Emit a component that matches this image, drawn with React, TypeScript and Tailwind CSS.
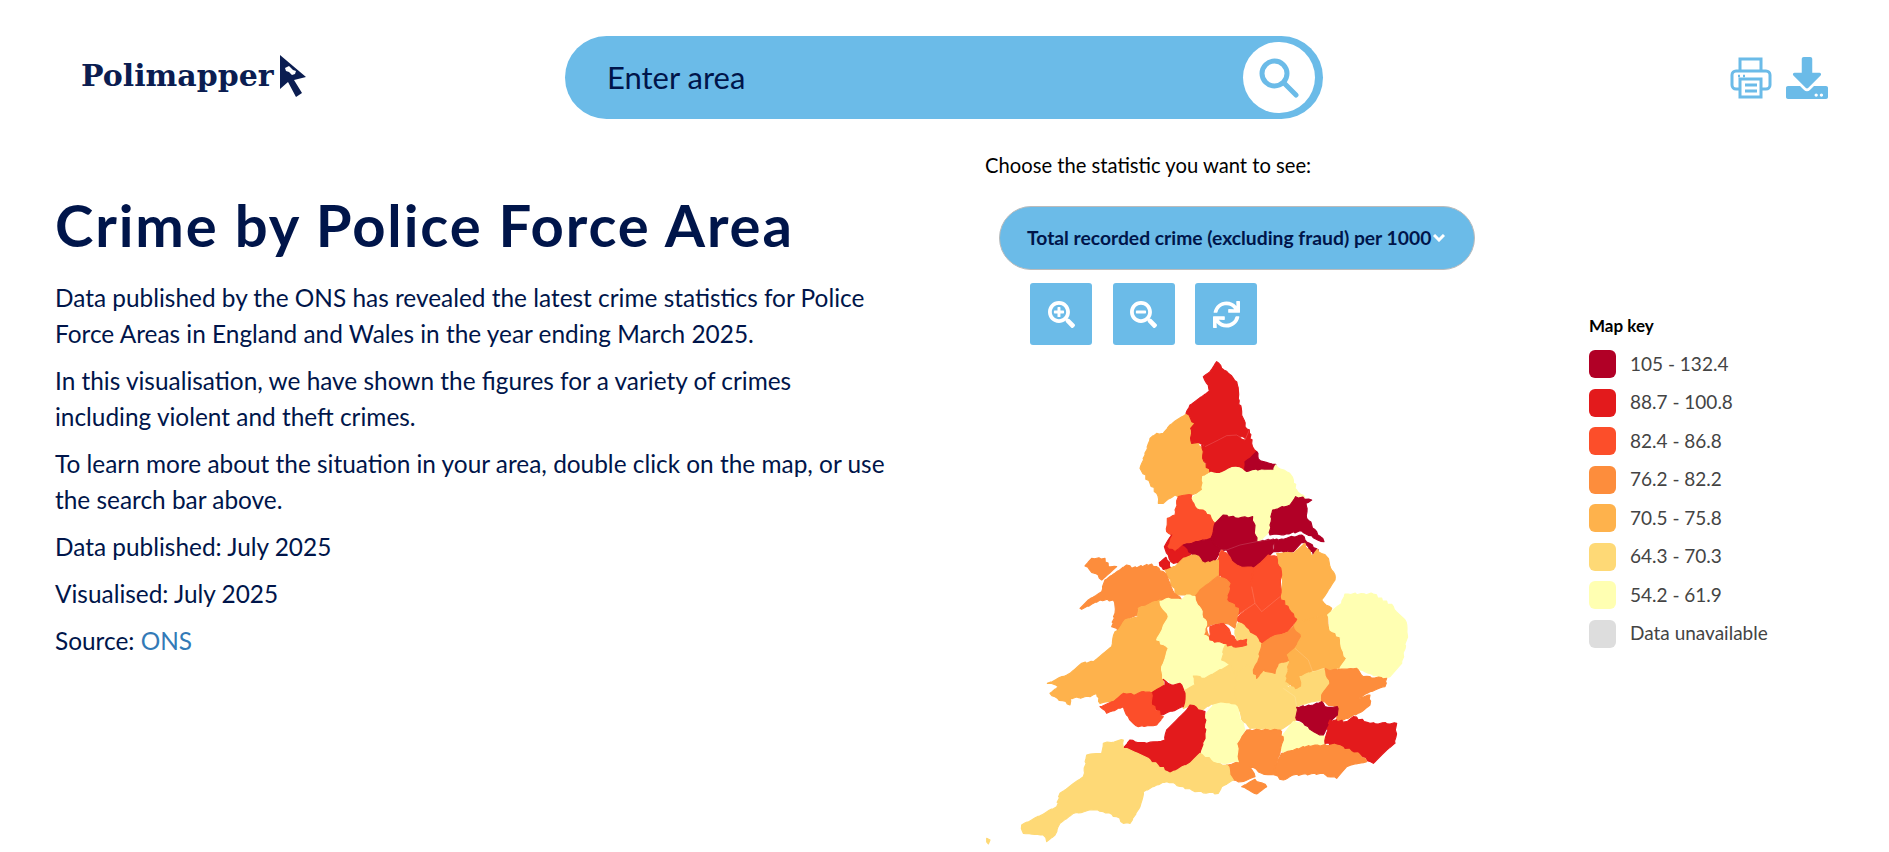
import { FaDownload, FaSearchMinus, FaSearchPlus, FaSync } from "react-icons/fa";

const colors = {
  a: "#b10026",
  b: "#e31a1c",
  c: "#fc4e2a",
  d: "#fd8d3c",
  e: "#feb24c",
  f: "#fed976",
  g: "#ffffb2",
};

type Region = { fill: string; points: string };

// the outlines were read off crops of different areas, so each set has its own offset
const at = (dx: number, dy: number, raw: string) =>
  raw
    .trim()
    .split(/\s+/)
    .map((p) => {
      const [x, y] = p.split(",").map(Number);
      return `${x + dx},${y + dy}`;
    })
    .join(" ");

const north = (raw: string) => at(510, 45, raw);
const south = (raw: string) => at(0, 750, raw);

// breaks long straight edges into short uneven steps, like the real boundaries
const rough = (raw: string) => {
  const pts = raw.split(" ").map((p) => p.split(",").map(Number));
  const out: string[] = [];
  pts.forEach(([x1, y1], i) => {
    const [x2, y2] = pts[(i + 1) % pts.length];
    const steps = Math.max(1, Math.round(Math.hypot(x2 - x1, y2 - y1) / 9));
    for (let s = 0; s < steps; s++) {
      const x = x1 + ((x2 - x1) * s) / steps;
      const y = y1 + ((y2 - y1) * s) / steps;
      const n = s === 0 ? 0 : Math.sin(x * 12.9 + y * 78.2) * 2.6;
      out.push(`${(x + n).toFixed(1)},${(y - n).toFixed(1)}`);
    }
  });
  return out.join(" ");
};

const regions: Region[] = [
  { fill: colors.e, points: north("168,178 195,205 182,225 185,265 205,262 220,290 218,310 243,350 218,365 218,405 185,420 145,425 135,420 115,432 100,445 85,445 80,415 60,385 30,340 45,300 60,250 80,235 100,235 120,210 140,195") },
  { fill: colors.b, points: north("260,20 275,40 295,55 310,70 322,90 325,130 335,170 345,215 358,225 345,250 320,240 290,242 265,255 225,275 205,262 185,265 182,220 195,205 168,175 180,150 215,125 238,108 230,85 220,65 240,50") },
  { fill: colors.b, points: north("225,275 265,255 290,242 320,240 345,255 358,225 365,265 380,290 360,310 347,350 335,342 305,338 270,355 240,352 218,310 220,290 215,270") },
  { fill: colors.a, points: north("380,290 385,312 437,328 432,345 395,345 347,350 345,320 360,310") },
  { fill: colors.g, points: north("437,330 470,350 490,375 500,405 525,430 495,425 480,450 428,465 420,510 418,530 400,548 380,560 365,500 368,485 325,490 280,480 255,505 240,480 195,455 183,430 218,405 218,365 243,352 270,355 305,338 335,342 347,352 395,345 432,345") },
  { fill: colors.a, points: north("497,425 545,435 528,445 530,490 560,530 582,560 545,542 515,528 470,536 455,540 420,540 420,510 428,465 480,450") },
  { fill: colors.a, points: north("455,552 515,540 550,578 565,585 550,600 530,570 515,562 490,590 445,590 430,590 430,555") },
  { fill: colors.c, points: north("145,425 185,420 183,430 195,455 240,480 255,505 243,550 205,560 160,570 135,590 110,575 125,540 110,530 112,490 135,480 140,445") },
  { fill: colors.b, points: north("125,540 103,575 115,600 130,625 160,625 185,595 160,570 135,590 110,575") },
  { fill: colors.b, points: "598,668 618,652 635,685 610,688" },
  { fill: colors.a, points: north("160,570 205,560 243,550 270,585 265,600 240,640 205,630 185,595") },
  { fill: colors.a, points: north("255,505 280,480 325,490 368,485 380,560 370,565 330,570 290,585 270,585 243,550") },
  { fill: colors.a, points: north("290,585 330,570 380,560 430,552 430,590 395,625 345,650 310,630 295,595") },
  { fill: colors.e, points: "950,640 1000,640 1035,610 1055,650 1072,628 1100,650 1125,705 1125,720 1105,750 1085,780 1115,805 1105,825 1020,845 1003,855 1010,838 960,770 968,720 950,680" },
  { fill: colors.c, points: "785,630 805,645 830,675 880,685 875,740 885,790 840,820 825,830 835,805 800,780 810,730 775,705 773,660" },
  { fill: colors.c, points: "880,685 900,670 925,645 950,650 965,705 960,770 905,815 885,790 875,740" },
  { fill: colors.c, points: "840,825 885,790 905,815 960,770 1010,838 985,875 935,892 905,912 865,870 835,845 830,835" },
  { fill: colors.e, points: "615,690 645,680 670,655 705,645 735,670 775,660 775,705 720,750 710,770 665,765 650,765" },
  { fill: colors.d, points: "720,750 775,708 810,730 800,780 835,805 830,835 825,865 795,850 750,855 735,865 730,885 745,900 750,900 740,855 718,800 705,770" },
  { fill: colors.d, points: "375,678 395,655 435,655 445,680 470,680 425,720 405,700" },
  { fill: colors.d, points: "360,805 385,780 425,755 435,720 500,675 515,685 575,672 610,695 650,765 665,780 600,780 535,805 535,825 495,840 475,870 455,860 465,820 460,780 420,780 365,808" },
  { fill: colors.e, points: "535,805 600,780 625,830 590,900 625,925 605,980 610,1015 615,1045 575,1060 550,1055 520,1065 490,1060 460,1085 420,1090 410,1060 390,1070 330,1075 330,1095 285,1070 270,1060 295,1040 262,1030 330,1000 365,970 400,965 455,920 465,875 475,870 495,840 535,830" },
  { fill: colors.g, points: "600,785 625,775 665,780 680,765 705,770 718,800 740,855 730,885 750,900 790,910 795,915 785,960 810,975 770,995 735,1015 700,1008 705,1035 675,1050 608,1015 605,980 625,925 590,900 625,830" },
  { fill: colors.f, points: "825,1000 860,975 880,985 890,1015 910,990 945,1000 955,970 988,960 978,1030 1000,1060 1010,1100 1010,1140 960,1170 870,1165 850,1145 825,1090" },
  { fill: colors.f, points: "825,870 835,848 865,870 905,912 895,960 880,985 860,975 825,1000 800,985 810,975 785,960 795,910 820,920 860,915 860,898 830,900" },
  { fill: colors.c, points: "750,858 790,850 810,875 830,905 860,898 860,915 820,920 790,910 750,900" },
  { fill: colors.d, points: "905,912 935,892 985,875 1003,855 1025,890 1005,925 982,945 988,960 955,970 945,1000 910,990 890,1015 880,990 895,960" },
  { fill: colors.e, points: "1003,855 1020,845 1100,825 1110,870 1140,890 1150,935 1160,955 1140,985 1105,990 1095,985 1058,995 1045,960 1005,925 1025,890" },
  { fill: colors.e, points: "982,945 1005,925 1045,960 1058,995 1020,1010 1025,1040 1005,1050 978,1025 988,960" },
  { fill: colors.g, points: "1103,825 1125,805 1145,790 1155,762 1240,762 1300,800 1335,840 1342,885 1325,970 1290,1010 1260,1013 1190,985 1140,985 1160,955 1150,935 1140,890 1110,870" },
  { fill: colors.f, points: "1020,1010 1058,995 1095,985 1110,1030 1085,1065 1085,1085 1060,1085 1010,1100 1000,1060 978,1028 1005,1050 1025,1040" },
  { fill: colors.d, points: "1095,985 1105,990 1190,985 1210,1010 1280,1015 1275,1040 1230,1055 1195,1075 1230,1065 1230,1095 1205,1115 1150,1140 1130,1140 1125,1100 1085,1085 1085,1065 1110,1030" },
  { fill: colors.g, points: "955,1202 1000,1145 1045,1160 1070,1180 1090,1185 1095,1215 1060,1220 985,1235 970,1238" },
  { fill: colors.a, points: "1010,1102 1060,1095 1085,1085 1095,1100 1132,1100 1132,1125 1115,1140 1090,1185 1070,1180 1045,1160 1010,1140" },
  { fill: colors.b, points: "1110,1140 1160,1145 1180,1130 1230,1150 1310,1150 1305,1210 1280,1230 1240,1270 1200,1245 1130,1215 1095,1210 1100,1180" },
  { fill: colors.d, points: "945,1280 965,1240 1045,1217 1130,1215 1200,1245 1220,1265 1160,1280 1130,1315 1080,1300 1000,1305 970,1320 945,1305" },
  { fill: colors.d, points: "830,1210 860,1170 960,1170 970,1200 960,1238 945,1280 945,1305 905,1300 870,1280 885,1310 845,1325 820,1320 800,1275 835,1265" },
  { fill: colors.d, points: south("845,590 885,568 920,590 890,612") },
  { fill: colors.f, points: "675,1050 705,1035 700,1008 735,1015 770,995 810,975 830,1005 825,1060 825,1095 780,1095 755,1092 725,1110 690,1095 670,1105" },
  { fill: colors.g, points: south("760,345 790,340 825,345 850,400 855,420 830,460 835,515 770,520 720,490 735,440 735,375") },
  { fill: colors.b, points: "610,1018 635,1035 660,1030 675,1060 670,1100 605,1125 575,1100 573,1060 615,1035" },
  { fill: colors.c, points: south("420,350 460,335 490,310 520,315 550,305 575,310 575,345 610,380 590,405 535,410 505,380 490,350 440,370") },
  { fill: colors.b, points: south("690,345 735,365 735,440 720,490 690,520 630,550 570,510 490,475 510,450 560,460 615,450 620,420 680,360") },
  { fill: colors.f, points: south("430,460 490,450 490,475 570,510 630,550 620,575 590,585 550,605 540,650 510,700 490,700 470,680 430,665 400,660 340,670 300,700 285,735 260,755 250,735 190,730 185,705 215,690 290,650 300,610 370,560 380,495 425,490") },
  { fill: colors.f, points: south("630,550 690,520 720,490 770,520 800,525 820,570 785,590 775,610 705,605 670,590 620,575") },
  { fill: colors.f, points: south("80,745 90,750 85,762") },
];

// faint boundaries between neighbours of the same colour
const seams = [
  north("225,275 265,255 290,242 320,240 345,255 358,225"),
  north("270,585 290,585 330,570 380,560 430,552"),
  "875,740 885,790 840,820",
  "885,790 905,815 960,770",
  "1005,925 1045,960 1058,995 1095,985",
  "970,1045 1005,1070 1010,1100",
];

const legend = [
  { color: colors.a, label: "105 - 132.4" },
  { color: colors.b, label: "88.7 - 100.8" },
  { color: colors.c, label: "82.4 - 86.8" },
  { color: colors.d, label: "76.2 - 82.2" },
  { color: colors.e, label: "70.5 - 75.8" },
  { color: colors.f, label: "64.3 - 70.3" },
  { color: colors.g, label: "54.2 - 61.9" },
  { color: "#dddddd", label: "Data unavailable" },
];

const Logo = () => (
  <div className="flex items-center gap-[6px]">
    <span className="font-['DejaVu_Serif',serif] text-[30px] leading-none font-bold text-[#0b1d51]">
      Polimapper
    </span>
    <svg viewBox="0 0 26 42" className="h-[42px] w-[26px] shrink-0">
      <polygon points="0,0 26,22 14,25 22,38 16,42 8,27 0,34" fill="#0b1d51" />
      <path d="M5 13l4-2 4 4 3 1-1 3-3 1-3-3-3-1z" fill="#fff" />
    </svg>
  </div>
);

const SearchBar = () => (
  <div className="flex h-[83px] w-[758px] items-center rounded-full bg-[#6bbbe8] pr-[8px] pl-[42px]">
    <input
      placeholder="Enter area"
      className="min-w-0 flex-1 bg-transparent text-[31px] text-[#00154a] outline-none placeholder:text-[#00154a]"
    />
    <div className="flex h-[71px] w-[72px] items-center justify-center rounded-full bg-white">
      <svg viewBox="0 0 40 40" fill="none" stroke="#6bbbe8" strokeWidth="5" strokeLinecap="round" className="h-[40px] w-[40px]">
        <circle cx="15.5" cy="15.5" r="12.5" />
        <path d="M25 25l12 12" />
      </svg>
    </div>
  </div>
);

const PrintIcon = () => (
  <svg viewBox="0 0 42 42" fill="none" stroke="#6bbbe8" strokeWidth="3" className="h-[42px] w-[42px]">
    <path d="M10 14V2h21v12" />
    <path d="M10 32H6a4 4 0 0 1-4-4V18a4 4 0 0 1 4-4h30a4 4 0 0 1 4 4v10a4 4 0 0 1-4 4h-4" />
    <rect x="10" y="22" width="21" height="18" />
    <path d="M15 28h12M15 34h12" />
    <path d="M8 19h2M13 19h2" strokeWidth="2.5" />
  </svg>
);

const MapControl = ({ children }: { children: React.ReactNode }) => (
  <button className="flex h-[62px] w-[62px] items-center justify-center rounded-[3px] bg-[#6bbbe8] text-[27px] text-white">
    {children}
  </button>
);

const EnglandWalesMap = () => (
  <svg viewBox="0 0 1440 1536" className="mt-[-5px] ml-[-25px] h-[512px] w-[480px] shrink-0">
    {regions.map((region) => (
      <polygon
        key={region.points}
        points={rough(region.points)}
        fill={region.fill}
        stroke={region.fill}
        strokeWidth="3.5"
        strokeLinejoin="round"
      />
    ))}
    {seams.map((seam) => (
      <polyline key={seam} points={seam} fill="none" stroke="#ffffff" strokeOpacity="0.3" strokeWidth="1.5" />
    ))}
  </svg>
);

export default function App() {
  return (
    <div className="h-[852px] w-full overflow-hidden bg-white font-['Lato',sans-serif] text-[#00154a]">
      <header className="flex h-[120px]">
        <div className="flex w-[565px] items-center pt-[32px] pl-[81px]">
          <Logo />
        </div>
        <div className="pt-[36px]">
          <SearchBar />
        </div>
        <div className="ml-[407px] flex items-start gap-[14px] pt-[57px]">
          <PrintIcon />
          <FaDownload className="text-[42px] text-[#6bbbe8]" />
        </div>
      </header>

      <main className="flex">
        <section className="w-[930px] pt-[70px] pl-[55px]">
          <h1 className="text-[58px] leading-[70px] font-bold tracking-[1.9px] text-[#00154a]">
            Crime by Police Force Area
          </h1>
          <div className="mt-[20px] w-[850px] space-y-[11px] text-[24.4px] leading-[36px]">
            <p>
              Data published by the ONS has revealed the latest crime statistics for Police
              <br />
              Force Areas in England and Wales in the year ending March 2025.
            </p>
            <p>
              In this visualisation, we have shown the figures for a variety of crimes
              <br />
              including violent and theft crimes.
            </p>
            <p>
              To learn more about the situation in your area, double click on the map, or use
              <br />
              the search bar above.
            </p>
            <p>Data published: July 2025</p>
            <p>Visualised: July 2025</p>
            <p>
              Source: <a className="text-[#337ab7]">ONS</a>
            </p>
          </div>
        </section>

        <section className="w-[604px] pt-[32px] pl-[55px]">
          <p className="text-[20.2px] leading-[26px] text-black">Choose the statistic you want to see:</p>
          <div className="mt-[28px] ml-[14px] flex h-[64px] w-[476px] items-center rounded-full border border-[#bbbbbb] bg-[#6bbbe8] pl-[27px]">
            <span className="text-[19.3px] font-bold whitespace-nowrap text-[#00154a]">
              Total recorded crime (excluding fraud) per 1000
            </span>
            <svg viewBox="0 0 12 8" fill="none" stroke="#fff" strokeWidth="3" className="ml-[2px] h-[8px] w-[12px] shrink-0">
              <path d="M1 1l5 5 5-5" />
            </svg>
          </div>
          <div className="mt-[13px] ml-[45px] flex gap-[20.5px]">
            <MapControl>
              <FaSearchPlus />
            </MapControl>
            <MapControl>
              <FaSearchMinus />
            </MapControl>
            <MapControl>
              <FaSync />
            </MapControl>
          </div>
          <EnglandWalesMap />
        </section>

        <aside className="pt-[192px] pl-[55px]">
          <h2 className="text-[17px] leading-[28px] font-bold text-black">Map key</h2>
          <ul className="mt-[10px] flex flex-col gap-[10.5px]">
            {legend.map((item) => (
              <li key={item.label} className="flex h-[28px] items-center gap-[14px] text-[19px] text-[#444444]">
                <span className="h-[28px] w-[27px] rounded-[6px]" style={{ backgroundColor: item.color }} />
                {item.label}
              </li>
            ))}
          </ul>
        </aside>
      </main>
    </div>
  );
}
